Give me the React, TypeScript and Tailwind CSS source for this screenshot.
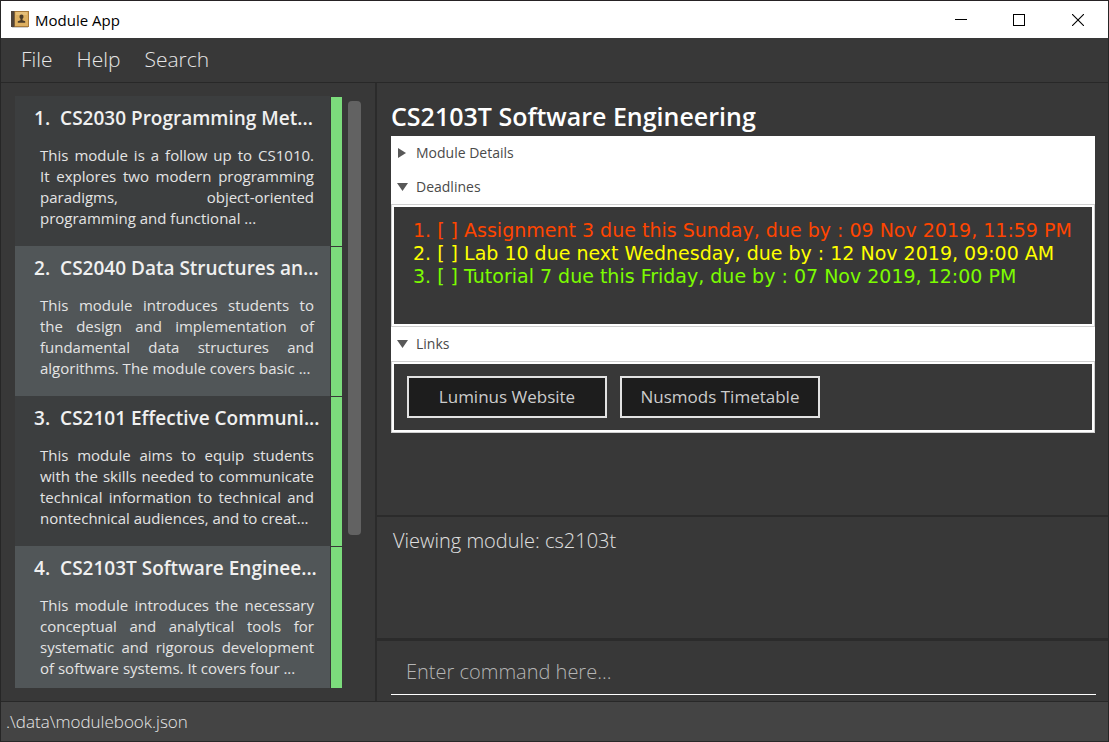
import type { ReactNode } from "react";

type Module = { index: number; title: string; lines: string[] };

const modules: Module[] = [
  {
    index: 1,
    title: "CS2030 Programming Met...",
    lines: [
      "This module is a follow up to CS1010.",
      "It explores two modern programming",
      "paradigms, object-oriented",
      "programming and functional ...",
    ],
  },
  {
    index: 2,
    title: "CS2040 Data Structures an...",
    lines: [
      "This module introduces students to",
      "the design and implementation of",
      "fundamental data structures and",
      "algorithms. The module covers basic ...",
    ],
  },
  {
    index: 3,
    title: "CS2101 Effective Communi...",
    lines: [
      "This module aims to equip students",
      "with the skills needed to communicate",
      "technical information to technical and",
      "nontechnical audiences, and to creat...",
    ],
  },
  {
    index: 4,
    title: "CS2103T Software Enginee...",
    lines: [
      "This module introduces the necessary",
      "conceptual and analytical tools for",
      "systematic and rigorous development",
      "of software systems. It covers four ...",
    ],
  },
];

const deadlines = [
  { text: "1. [ ] Assignment 3 due this Sunday, due by : 09 Nov 2019, 11:59 PM", color: "text-[#ff4500]" },
  { text: "2. [ ] Lab 10 due next Wednesday, due by : 12 Nov 2019, 09:00 AM", color: "text-[#ffff00]" },
  { text: "3. [ ] Tutorial 7 due this Friday, due by : 07 Nov 2019, 12:00 PM", color: "text-[#7cfc00]" },
];

function BookIcon() {
  return (
    <svg width="18" height="17" viewBox="0 0 18 17" aria-hidden="true">
      <rect x="0" y="0" width="18" height="16" fill="#a87a3a" />
      <rect x="0" y="0" width="3" height="16" fill="#4f4339" />
      <rect x="3" y="0" width="1" height="16" fill="#7d5f38" />
      <rect x="4" y="1" width="13" height="14" fill="#deb061" />
      <rect x="5" y="1" width="11" height="3" fill="#e6bf78" />
      <path d="M10.5 3.5a2 2 0 0 1 2 2.2c0 1-.5 1.6-1 2v1.6l2.7.9v1.6H6.8v-1.6l2.7-.9V7.700c-.5-.4-1-1-1-2a2 2 0 0 1 2-2.200z" fill="#4b3b28" />
      <rect x="1" y="16" width="16" height="1" fill="#cfcfcf" />
    </svg>
  );
}

function TitleBar() {
  return (
    <header className="flex h-[38px] shrink-0 items-center justify-between border-t border-[#262224] bg-white pl-[10px]">
      <div className="flex items-center gap-[6px]">
        <BookIcon />
        <h1 className="text-[15px] leading-5 text-black">Module App</h1>
      </div>
      <div className="flex h-full text-black">
        <button type="button" aria-label="Minimize" className="grid w-[58px] place-items-center">
          <svg width="12" height="12" viewBox="0 0 12 12" shapeRendering="crispEdges">
            <path d="M0 5.500h12" stroke="currentColor" />
          </svg>
        </button>
        <button type="button" aria-label="Maximize" className="grid w-[58px] place-items-center">
          <svg width="12" height="12" viewBox="0 0 12 12" shapeRendering="crispEdges">
            <rect x="0.5" y="0.5" width="11" height="11" fill="none" stroke="currentColor" />
          </svg>
        </button>
        <button type="button" aria-label="Close" className="grid w-[60px] place-items-center">
          <svg width="12" height="12" viewBox="0 0 12 12">
            <path d="M0 0l12 12M12 0L0 12" stroke="currentColor" strokeWidth="1.100" />
          </svg>
        </button>
      </div>
    </header>
  );
}

function MenuBar() {
  return (
    <nav className="flex h-[45px] shrink-0 items-center gap-6 border-b border-[#282828] px-5 text-[21px] font-light text-[#e6e6e6]">
      <button type="button">File</button>
      <button type="button">Help</button>
      <button type="button">Search</button>
    </nav>
  );
}

function ModuleCard({ module }: { module: Module }) {
  const shade = module.index % 2 === 0 ? "bg-[#515658]" : "bg-[#3c3e3f]";
  return (
    <li className={`flex h-[150px] shrink-0 ${shade}`}>
      <article className="min-w-0 flex-1 pl-[19px] pr-2 pt-[10px]">
        <h2 className="flex gap-[10px] whitespace-nowrap text-[19px] font-semibold leading-6 text-[#f0f0f0]">
          <span>{module.index}.</span>
          <span>{module.title}</span>
        </h2>
        <p className="mr-2 mt-[15px] pl-[6px] text-[15px] leading-[21px] text-[#e4e4e4]">
          {module.lines.map((line, i) => (
            <span
              key={line}
              className={`block whitespace-nowrap ${i < 3 ? "[text-align-last:justify]" : ""}`}
            >
              {line}
            </span>
          ))}
        </p>
      </article>
      <div className="w-[14px] border-x border-t border-[#383838] bg-[#383838] pr-px">
        <div className="h-full bg-[#7cdc7c]" />
      </div>
    </li>
  );
}

function ModuleList() {
  return (
    <aside className="flex w-[374px] shrink-0 gap-1 px-[14px] py-[13px]">
      <ul className="flex min-w-0 flex-1 flex-col overflow-hidden">
        {modules.map((m) => (
          <ModuleCard key={m.index} module={m} />
        ))}
      </ul>
      <div className="w-[13px] pt-[5px]">
        <div className="h-[74%] rounded-[4px] bg-[#626262]" />
      </div>
    </aside>
  );
}

function Section({ title, open, children }: { title: string; open: boolean; children?: ReactNode }) {
  return (
    <section>
      <button
        type="button"
        aria-expanded={open}
        className="flex h-[34px] w-full items-center gap-2 bg-white pb-px pl-[6px] text-[14px] text-[#4a4a4a]"
      >
        <svg width="11" height="10" viewBox="0 0 11 10" aria-hidden="true">
          <path d={open ? "M0 1h11L5.500 9z" : "M1 0v10L9 5z"} fill="#585858" />
        </svg>
        {title}
      </button>
      {open && (
        <div className="border border-[#d0d0d0]">
          <div className="border-2 border-white">{children}</div>
        </div>
      )}
    </section>
  );
}

function ModuleDetail() {
  return (
    <section className="flex-1 pl-[14px] pr-[13px] pt-4">
      <h2 className="text-[25px] font-semibold leading-[35px] text-white">CS2103T Software Engineering</h2>
      <div className="mt-[2px]">
        <Section title="Module Details" open={false} />
        <Section title="Deadlines" open>
          <ul className="h-[117px] whitespace-nowrap px-[19px] pt-3 font-['DejaVu_Sans',Verdana,sans-serif] text-[19px] leading-[23px]">
            {deadlines.map((d) => (
              <li key={d.text} className={d.color}>
                {d.text}
              </li>
            ))}
          </ul>
        </Section>
        <Section title="Links" open>
          <div className="flex gap-[13px] px-[13px] py-3 text-[17px] text-[#cccccc]">
            <button type="button" className="h-[42px] w-[200px] border-2 border-[#e2e2e2] bg-[#1d1d1d]">
              Luminus Website
            </button>
            <button type="button" className="h-[42px] w-[200px] border-2 border-[#e2e2e2] bg-[#1d1d1d]">
              Nusmods Timetable
            </button>
          </div>
        </Section>
      </div>
    </section>
  );
}

export default function App() {
  return (
    <div className="flex h-screen flex-col border-x border-[#262626] bg-[#383838] font-['Open_Sans','Noto_Sans',sans-serif]">
      <TitleBar />
      <MenuBar />
      <main className="flex min-h-0 flex-1">
        <ModuleList />
        <div className="flex min-w-0 flex-1 flex-col border-l-2 border-[#2b2b2b]">
          <ModuleDetail />
          <output className="block h-[123px] border-t-2 border-[#2b2b2b] px-4 pt-2 text-[20px] font-light leading-8 text-[#e0e0e0]">
            Viewing module: cs2103t
          </output>
          <form className="border-t-[3px] border-[#2b2b2b] px-3 pb-[6px] pl-[14px] pt-2">
            <input
              type="text"
              aria-label="Command"
              placeholder="Enter command here..."
              className="block h-[46px] w-full border-b border-white bg-transparent px-[15px] text-[20px] font-light text-white outline-none placeholder:text-[#b4b4b4]"
            />
          </form>
        </div>
      </main>
      <footer className="h-[41px] shrink-0 border-y border-[#282828] bg-[#444444] px-[5px] text-[17px] font-light leading-[39px] text-[#e6e6e6]">
        .\data\modulebook.json
      </footer>
    </div>
  );
}
